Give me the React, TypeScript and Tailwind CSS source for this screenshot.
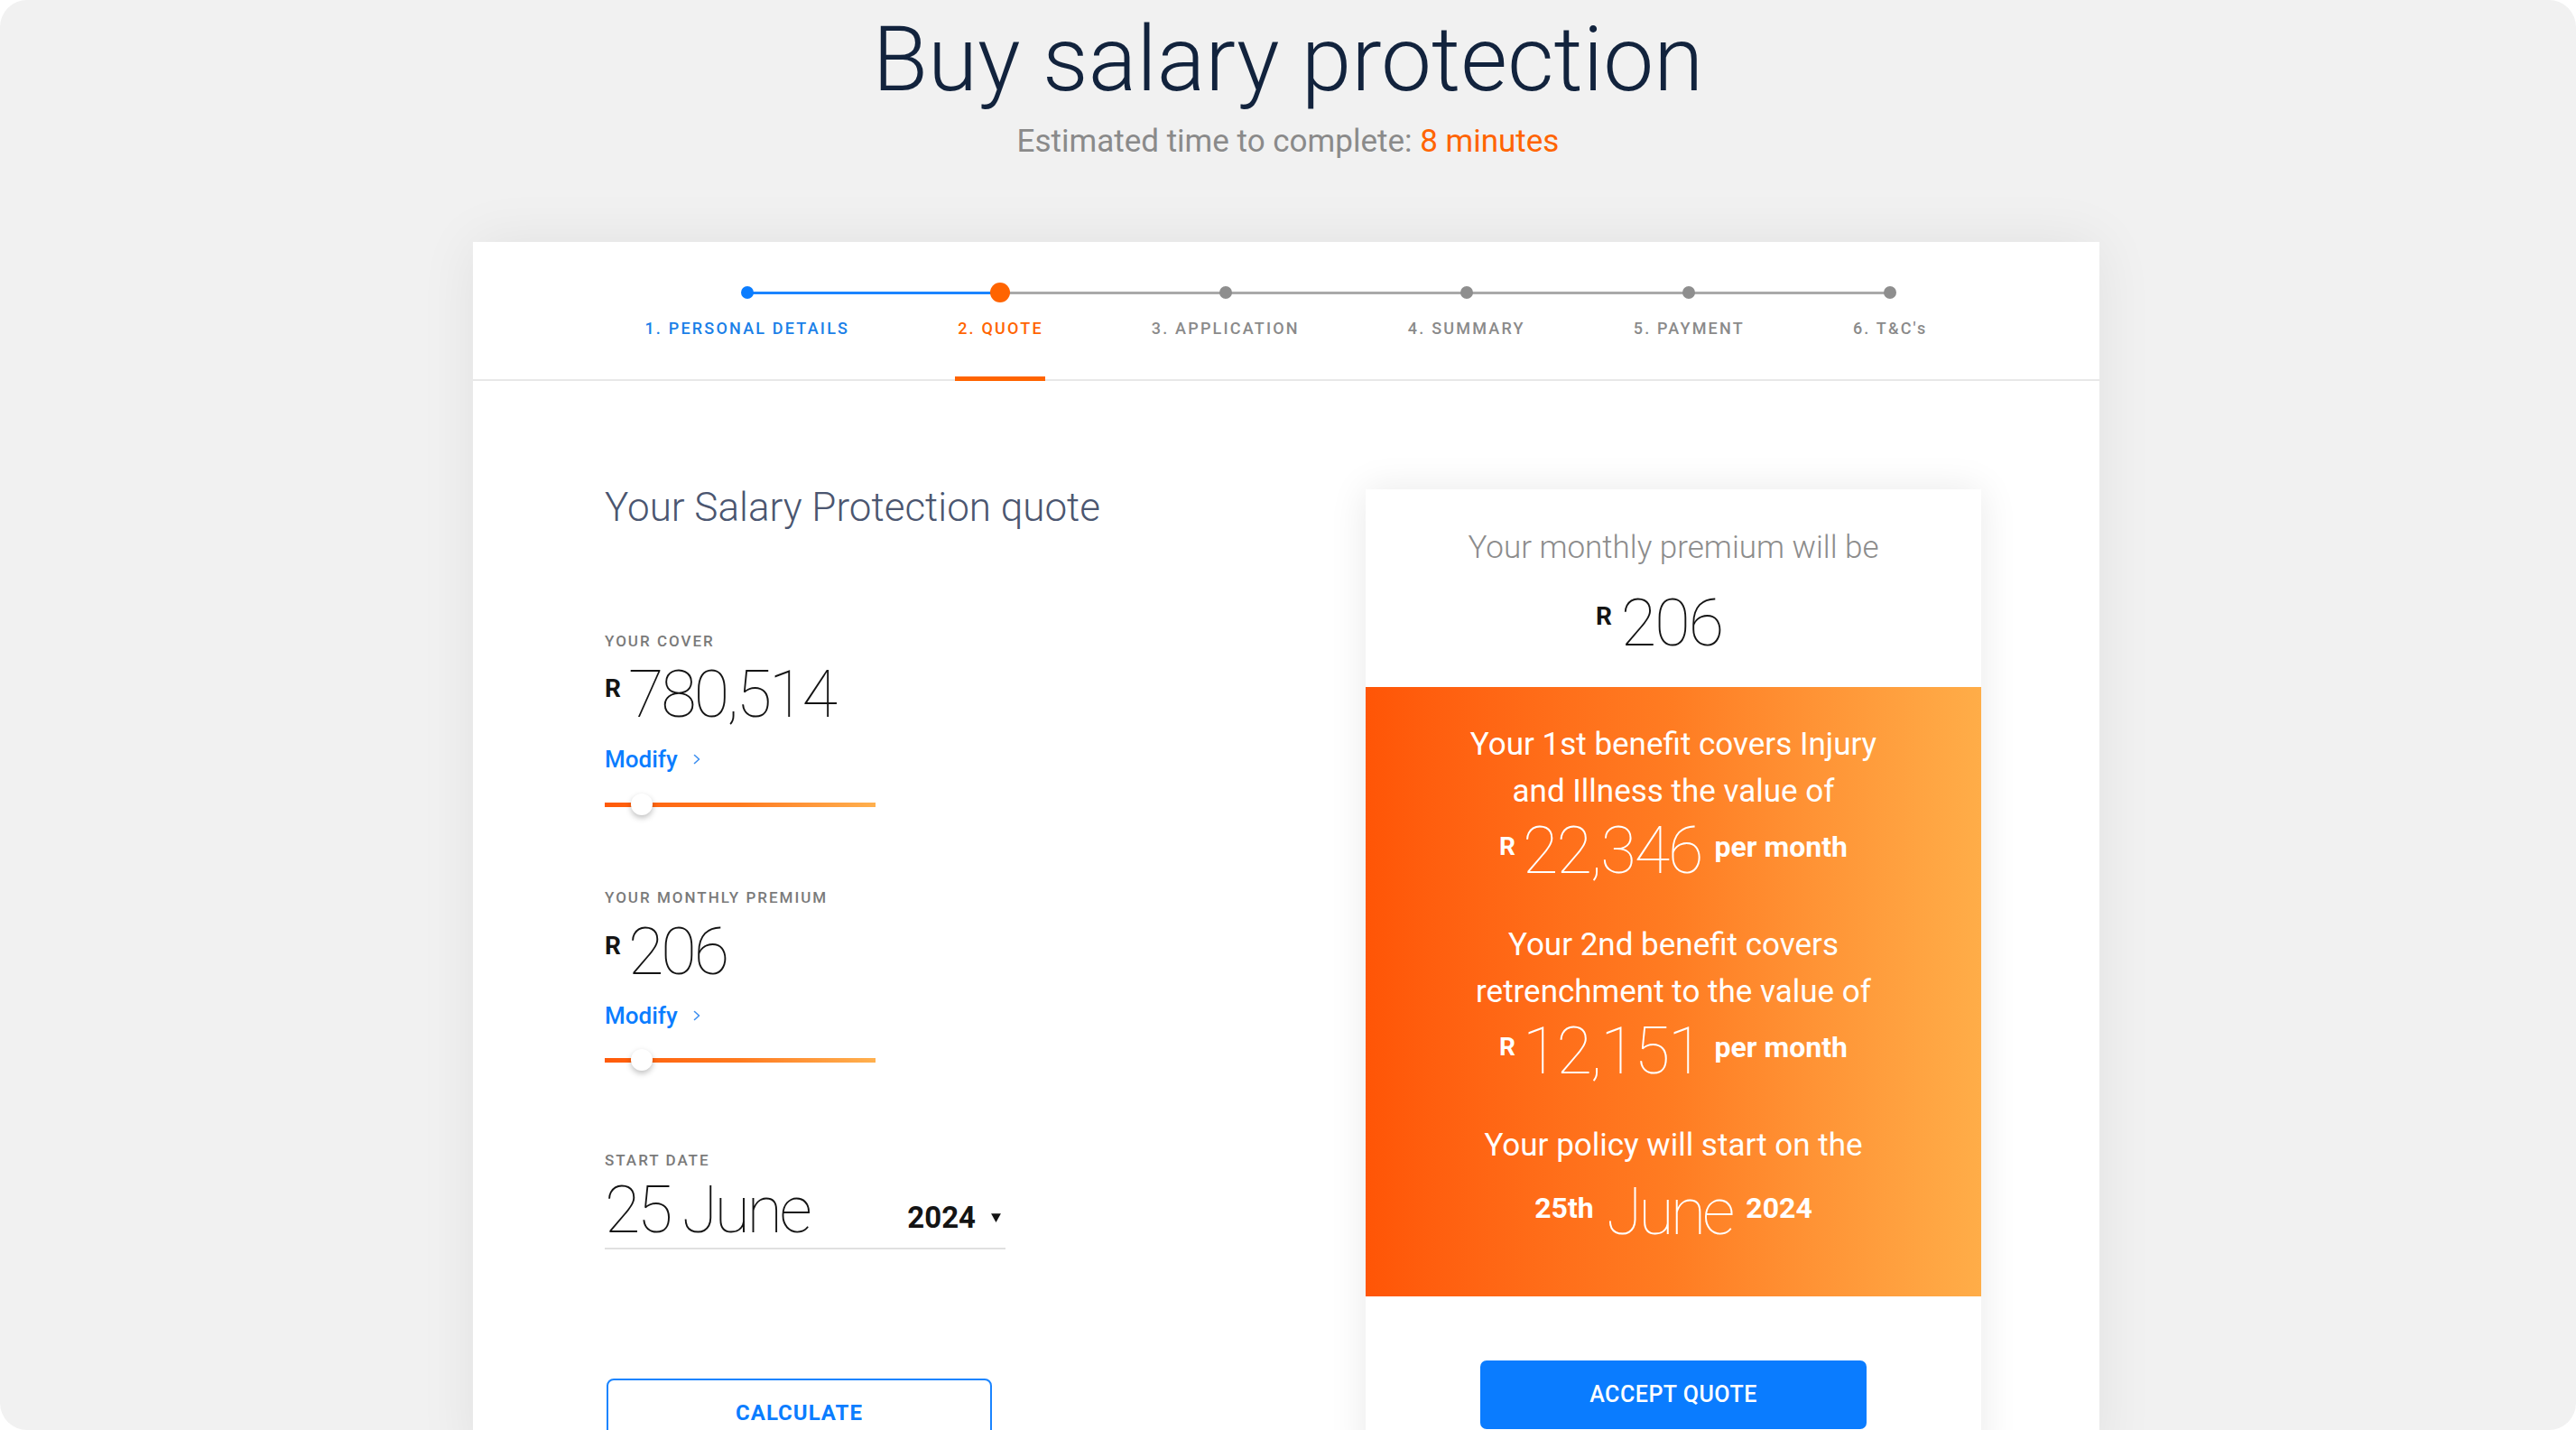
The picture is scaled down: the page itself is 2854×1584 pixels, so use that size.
import React from "react";

const STEPS = [
  { label: "1. PERSONAL DETAILS", state: "done" },
  { label: "2. QUOTE", state: "active" },
  { label: "3. APPLICATION", state: "todo" },
  { label: "4. SUMMARY", state: "todo" },
  { label: "5. PAYMENT", state: "todo" },
  { label: "6. T&C's", state: "todo" },
];

const Stepper = () => (
  <div className="relative flex justify-center h-[154px] border-b-2 border-[#e8e8e8]">
    {STEPS.map((step, i) => {
      const leftBlue = i === 1;
      const rightBlue = i === 0;
      return (
        <div key={step.label} className="relative flex flex-col items-center px-[60px] pt-[45px]">
          {i > 0 && (
            <div
              className={`absolute top-[55px] left-0 w-1/2 h-[3px] ${leftBlue ? "bg-[#1a84ff]" : "bg-[#a9a9a9]"}`}
            />
          )}
          {i < STEPS.length - 1 && (
            <div
              className={`absolute top-[55px] left-1/2 w-1/2 h-[3px] ${rightBlue ? "bg-[#1a84ff]" : "bg-[#a9a9a9]"}`}
            />
          )}
          <div className="relative h-[22px] flex items-center justify-center">
            {step.state === "done" && <div className="w-[14px] h-[14px] rounded-full bg-[#0b7dff]" />}
            {step.state === "active" && <div className="w-[22px] h-[22px] rounded-full bg-[#ff6400]" />}
            {step.state === "todo" && <div className="w-[14px] h-[14px] rounded-full bg-[#8e8e8e]" />}
          </div>
          <div
            className={`mt-[20px] text-[18px] leading-none font-medium tracking-[2.2px] whitespace-nowrap ${
              step.state === "done" ? "text-[#1a7fe8]" : step.state === "active" ? "text-[#ff6400]" : "text-[#8a8a8a]"
            }`}
          >
            {step.label}
          </div>
          {step.state === "active" && (
            <div className="absolute bottom-[-2px] left-1/2 -translate-x-1/2 w-[100px] h-[5px] bg-[#ff6400]" />
          )}
        </div>
      );
    })}
  </div>
);

const Amount = ({ value }: { value: string }) => (
  <div className="flex items-start text-[#141414]">
    <span className="mt-[15px] mr-[8px] text-[28px] leading-none font-bold">R</span>
    <span className="text-[72px] leading-none font-thin tracking-[-3px]">{value}</span>
  </div>
);

const Modify = () => (
  <div className="flex items-center gap-[16px] text-[26px] leading-none font-medium text-[#0b7dff]">
    Modify
    <svg width="10" height="16" viewBox="0 0 10 16" fill="none">
      <path d="M2.5 3.5l5 4.5-5 4.5" stroke="#3d8ff0" strokeWidth="1.6" strokeLinecap="round" strokeLinejoin="round" />
    </svg>
  </div>
);

const Slider = ({ thumbLeft }: { thumbLeft: number }) => (
  <div className="relative w-[300px] h-[24px]">
    <div className="absolute left-0 right-0 top-[10px] h-[5px] bg-linear-to-r from-[#ff5a08] via-[#ff7a1e] to-[#ffb04e]" />
    <div
      className="absolute top-0 w-[24px] h-[24px] rounded-full bg-white shadow-[0_3px_6px_rgba(0,0,0,0.25)]"
      style={{ left: thumbLeft }}
    />
  </div>
);

const FieldLabel = ({ children }: { children: React.ReactNode }) => (
  <div className="text-[17px] leading-none font-medium tracking-[2px] text-[#7a7a7a]">{children}</div>
);

const QuoteForm = () => (
  <div className="flex flex-col items-start pl-[146px]">
    <h2 className="text-[44px] leading-none font-light text-[#4b5670] whitespace-nowrap">Your Salary Protection quote</h2>

    <div className="mt-[118px]">
      <FieldLabel>YOUR COVER</FieldLabel>
    </div>
    <div className="mt-[15px]">
      <Amount value="780,514" />
    </div>
    <div className="mt-[22px]">
      <Modify />
    </div>
    <div className="mt-[25px]">
      <Slider thumbLeft={29} />
    </div>

    <div className="mt-[83px]">
      <FieldLabel>YOUR MONTHLY PREMIUM</FieldLabel>
    </div>
    <div className="mt-[16px]">
      <Amount value="206" />
    </div>
    <div className="mt-[21px]">
      <Modify />
    </div>
    <div className="mt-[24px]">
      <Slider thumbLeft={29} />
    </div>

    <div className="mt-[91px]">
      <FieldLabel>START DATE</FieldLabel>
    </div>
    <div className="mt-[11px] w-[444px] flex items-start justify-between border-b-2 border-[#e0e0e0] pb-[5px]">
      <span className="text-[72px] leading-none font-thin tracking-[-3.5px] text-[#141414] whitespace-nowrap">25 June</span>
      <span className="mt-[27px] mr-[4px] flex items-center gap-[16px] text-[33px] leading-none font-bold text-[#141414]">
        2024
        <svg width="13" height="13" viewBox="0 0 12 12">
          <polygon points="1,2 11,2 6,11" fill="#141414" />
        </svg>
      </span>
    </div>

    <button className="mt-[143px] ml-[2px] w-[427px] h-[76px] rounded-[8px] border-2 border-[#1a84ff] bg-white text-[24px] font-bold tracking-[1px] text-[#0b7dff]">
      CALCULATE
    </button>
  </div>
);

const Line = ({ children }: { children: React.ReactNode }) => (
  <p className="text-[35px] leading-[52px] text-white">{children}</p>
);

const PerMonth = ({ value }: { value: string }) => (
  <div className="flex items-start justify-center text-white">
    <span className="mt-[17px] mr-[8px] text-[28px] leading-none font-bold">R</span>
    <span className="text-[72px] leading-none font-thin tracking-[-2px]">{value}</span>
    <span className="mt-[15px] ml-[14px] text-[32px] leading-none font-bold">per month</span>
  </div>
);

const PremiumPanel = () => (
  <div className="mt-[2px] w-[682px] bg-white shadow-[0_0_40px_rgba(0,0,0,0.09)]">
    <div className="h-[219px] flex flex-col items-center pt-[47px]">
      <div className="text-[35px] leading-none font-light text-[#8c8c8c]">Your monthly premium will be</div>
      <div className="mt-[31px] mr-[32px] flex items-start text-[#141414]">
        <span className="mt-[14px] mr-[10px] text-[28px] leading-none font-bold">R</span>
        <span className="text-[72px] leading-none font-thin tracking-[-2px]">206</span>
      </div>
    </div>

    <div className="h-[675px] flex flex-col items-center text-center pt-[38px] bg-linear-to-r from-[#ff5506] via-[#ff7c22] to-[#ffad48]">
      <Line>
        Your 1st benefit covers Injury
        <br />
        and Illness the value of
      </Line>
      <div className="mt-[4px]">
        <PerMonth value="22,346" />
      </div>
      <div className="mt-[42px]">
        <Line>
          Your 2nd benefit covers
          <br />
          retrenchment to the value of
        </Line>
      </div>
      <div className="mt-[4px]">
        <PerMonth value="12,151" />
      </div>
      <div className="mt-[42px]">
        <Line>Your policy will start on the</Line>
      </div>
      <div className="mt-[12px] flex items-start text-white">
        <span className="mt-[15px] mr-[14px] text-[32px] leading-none font-bold">25th</span>
        <span className="text-[72px] leading-none font-thin tracking-[-4px]">June</span>
        <span className="mt-[15px] ml-[16px] text-[32px] leading-none font-bold">2024</span>
      </div>
    </div>

    <div className="flex justify-center pt-[71px] pb-[40px]">
      <button className="w-[428px] h-[76px] rounded-[7px] bg-[#0a7cff] text-[25px] font-medium tracking-[0.5px] text-white">
        ACCEPT QUOTE
      </button>
    </div>
  </div>
);

export default function App() {
  return (
    <div className="w-[2854px] h-[1584px] bg-white font-['Roboto',sans-serif]">
      <div className="w-full h-full rounded-[30px] bg-[#f1f1f1] overflow-hidden flex flex-col items-center">
        <h1 className="mt-[16px] text-[100px] leading-none font-light text-[#12233d] whitespace-nowrap">
          Buy salary protection
        </h1>
        <p className="mt-[23px] text-[35px] leading-none text-[#8a8a8a]">
          Estimated time to complete: <span className="text-[#ff6400]">8 minutes</span>
        </p>

        <div className="mt-[94px] mr-[4px] w-[1802px] shrink-0 bg-white shadow-[0_0_60px_rgba(0,0,0,0.07)]">
          <Stepper />
          <div className="flex justify-between pt-[118px] pr-[131px]">
            <QuoteForm />
            <PremiumPanel />
          </div>
        </div>
      </div>
    </div>
  );
}
